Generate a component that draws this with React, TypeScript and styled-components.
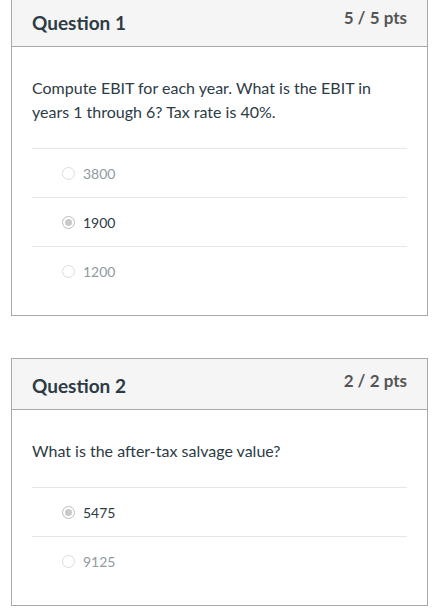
import * as React from 'react'
import styled, { createGlobalStyle } from 'styled-components'

// ___________________________________________________________________

const Global = createGlobalStyle`
  html, body {
    margin: 0;
    padding: 0;
    background: #fff;
  }
  body {
    font-family: Lato, "Noto Sans", sans-serif;
    color: #2d3b45;
  }
`

const Page = styled.div`
  margin-top: -5px;
  padding: 0 18px 0 11px;
`

const Card = styled.section`
  border: 1px solid #a9a9a9;
  background: #fff;
  & + & {
    margin-top: 42px;
  }
`

const Header = styled.header`
  display: flex;
  justify-content: space-between;
  align-items: flex-start;
  height: 51px;
  box-sizing: border-box;
  padding: 0 20px;
  background: #f5f5f5;
  border-bottom: 1px solid #a9a9a9;
`

const Title = styled.h2`
  margin: 16px 0 0;
  font-size: 19px;
  line-height: 22px;
  font-weight: 700;
  color: #2d3b45;
`

const Points = styled.div`
  margin-top: 12px;
  font-size: 17px;
  line-height: 20px;
  font-weight: 700;
  color: #555;
`

const Body = styled.div`
  padding: 29px 20px 20px;
`

const Prompt = styled.p`
  margin: 0 0 24px;
  font-size: 16px;
  line-height: 24px;
  color: #2d3b45;
`

const Answer = styled.div<{ $selected?: boolean }>`
  display: flex;
  align-items: center;
  gap: 8px;
  height: 48px;
  padding-left: 30px;
  border-top: 1px solid #e6e6e6;
  font-size: 14px;
  color: ${(p) => (p.$selected ? '#2d3b45' : '#8f9aa2')};
`

const Radio = styled.span<{ $checked?: boolean }>`
  position: relative;
  width: 13px;
  height: 13px;
  box-sizing: border-box;
  border-radius: 50%;
  border: 1px solid ${(p) => (p.$checked ? '#bcbcbc' : '#dcdcdc')};
  background: #fff;
  flex: none;
  &::after {
    content: '';
    display: ${(p) => (p.$checked ? 'block' : 'none')};
    position: absolute;
    inset: 2px;
    border-radius: 50%;
    background: #c9c9c9;
  }
`

type Question = {
  title: string
  points: string
  prompt: string
  answers: string[]
  selected: number
}

const questions: Question[] = [
  {
    title: 'Question 1',
    points: '5 / 5 pts',
    prompt:
      'Compute EBIT for each year. What is the EBIT in years 1 through 6? Tax rate is 40%.',
    answers: ['3800', '1900', '1200'],
    selected: 1,
  },
  {
    title: 'Question 2',
    points: '2 / 2 pts',
    prompt: 'What is the after-tax salvage value?',
    answers: ['5475', '9125'],
    selected: 0,
  },
]

const App = () => (
  <>
    <Global />
    <Page>
      {questions.map((q) => (
        <Card key={q.title}>
          <Header>
            <Title>{q.title}</Title>
            <Points>{q.points}</Points>
          </Header>
          <Body>
            <Prompt>{q.prompt}</Prompt>
            {q.answers.map((a, i) => (
              <Answer key={a} $selected={i === q.selected}>
                <Radio $checked={i === q.selected} />
                {a}
              </Answer>
            ))}
          </Body>
        </Card>
      ))}
    </Page>
  </>
)

export default App
